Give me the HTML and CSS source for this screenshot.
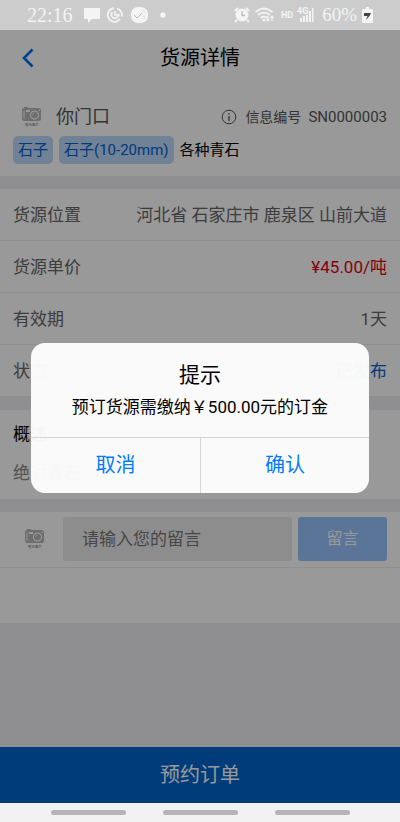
FILE: index.html
```html
<!DOCTYPE html>
<html lang="zh-CN">
<head>
<meta charset="utf-8">
<meta name="viewport" content="width=device-width, initial-scale=1">
<title>货源详情</title>
<link rel="stylesheet" href="styles.css">
</head>
<body>
<header class="status">
  <span class="time">22:16</span>
  <svg class="notices" width="84" height="18" viewBox="0 0 84 18" fill="#f4f4f4" aria-hidden="true">
    <path d="M1 2h14q1 0 1 1v9q0 1-1 1H8l-4 4v-4H1q-1 0-1-1V3q0-1 1-1z"/>
    <g fill="none" stroke="#f4f4f4" stroke-width="1.700">
      <path d="M30 2.200A6.800 6.800 0 1 0 36 13M33 2.500A6.800 6.800 0 0 1 37.800 10.500"/>
      <path d="M28.500 6A3.600 3.600 0 1 0 34.500 7.500M31 5v4h3"/>
    </g>
    <rect x="47" y="1" width="17" height="16" rx="7"/>
    <path d="M50 9l3 3 5-5" fill="none" stroke="#bbb"/>
    <path d="M60 4v3M60 10v4" stroke="#ccc" stroke-dasharray="1 1"/>
    <circle cx="79" cy="9" r="2.700"/>
  </svg>
  <span class="spacer"></span>
  <svg width="82" height="18" viewBox="0 0 82 18" fill="#f4f4f4" aria-hidden="true">
    <path d="M1 5l3-3M15 5l-3-3M3 14l-2 2M13 14l2 2" stroke="#f4f4f4" stroke-width="2"/>
    <circle cx="8" cy="9" r="6.500"/>
    <path d="M8 5v4.500h3" fill="none" stroke="#bbb" stroke-width="1.300"/>
    <g fill="none" stroke="#f4f4f4" stroke-width="1.700">
      <path d="M21.500 6q8.500-7 17 0M24 9q6-5 12 0M26.500 12q3.500-3 7 0"/>
      <path d="M34 10v5m-1.500-2l1.500 2 1.500-2M38 15v-5m-1.500 2l1.500-2 1.500 2" stroke-width="1.200"/>
    </g>
    <circle cx="30" cy="14" r="1.500"/>
    <text x="47" y="12" class="net">HD</text>
    <text x="63" y="8" class="net">4G</text>
    <path d="M66 12h2v4h-2zM69 10h2v6h-2zM72 9h2v7h-2zM75 5h2v11h-2zM78 2h1.500v14h-1.500z"/>
  </svg>
  <span class="percent">60%</span>
  <svg width="11" height="16" viewBox="0 0 11 16" aria-hidden="true">
    <path fill="#f4f4f4" d="M4 0h3v2h3q1 0 1 1v12q0 1-1 1H1q-1 0-1-1V3q0-1 1-1h3z"/>
    <path fill="#444" d="M2 6h7l-1.500 3L4 13l1.500-4H2z"/>
  </svg>
</header>

<div class="app">
  <nav class="bar">
    <button class="back" aria-label="返回"><svg width="12" height="20" viewBox="0 0 12 20"><path d="M10.500 1.500L2 10l8.500 8.500" fill="none" stroke="#0070f0" stroke-width="2.600"/></svg></button>
    <h1>货源详情</h1>
  </nav>

  <main>
    <section class="summary">
      <div class="owner">
        <svg class="camera" viewBox="0 0 20 22">
          <path fill="#b8b8b8" fill-rule="evenodd" d="M2 2V1h4v1h10.500q2.500 0 2.500 2v9q0 2-2 2H2q-2 0-2-2V4q0-2 2-2zM1.500 5v8h1V4.500zM4 4v2h4V4zM12.500 4.500a4.500 4.500 0 1 0 .01 0zM12.500 5.500a3.500 3.500 0 1 1-.01 0zM16.500 4v1h1.500V4z"/>
          <path fill="none" stroke="#fff" stroke-width=".7" d="M10.500 9a2.300 2.300 0 0 1 2-2"/>
          <text x="10" y="20" text-anchor="middle" font-size="3.500" fill="#777">暂无图片</text>
        </svg>
        <span class="name">你门口</span>
        <svg width="16" height="16" viewBox="0 0 16 16" aria-hidden="true"><circle cx="8" cy="8" r="6.800" fill="none" stroke="#555"/><path d="M8 7v5M8 4v1.500" stroke="#555" stroke-width="1.300"/></svg>
        <span class="serial"><span>信息编号</span><span class="number">SN0000003</span></span>
      </div>
      <div class="tags">
        <span class="tag">石子</span>
        <span class="tag">石子(10-20mm)</span>
        <span>各种青石</span>
      </div>
    </section>

    <dl class="details">
      <div><dt>货源位置</dt><dd>河北省 石家庄市 鹿泉区 山前大道</dd></div>
      <div><dt>货源单价</dt><dd class="price">¥45.00/吨</dd></div>
      <div><dt>有效期</dt><dd>1天</dd></div>
      <div><dt>状态</dt><dd class="state">已发布</dd></div>
    </dl>

    <section class="about">
      <h2>概述</h2>
      <p>绝对青石</p>
    </section>

    <section class="comments">
      <form class="comment">
        <svg class="camera" viewBox="0 0 20 22">
          <path fill="#b8b8b8" fill-rule="evenodd" d="M2 2V1h4v1h10.500q2.500 0 2.500 2v9q0 2-2 2H2q-2 0-2-2V4q0-2 2-2zM1.500 5v8h1V4.500zM4 4v2h4V4zM12.500 4.500a4.500 4.500 0 1 0 .01 0zM12.500 5.500a3.500 3.500 0 1 1-.01 0zM16.500 4v1h1.500V4z"/>
          <path fill="none" stroke="#fff" stroke-width=".7" d="M10.500 9a2.300 2.300 0 0 1 2-2"/>
          <text x="10" y="20" text-anchor="middle" font-size="3.500" fill="#777">暂无图片</text>
        </svg>
        <input type="text" placeholder="请输入您的留言" aria-label="留言内容">
        <button type="button">留言</button>
      </form>
    </section>
  </main>

  <button class="order">预约订单</button>

  <div class="mask">
    <div class="dialog" role="dialog" aria-modal="true" aria-labelledby="dialog-title">
      <div class="message">
        <h2 id="dialog-title">提示</h2>
        <p>预订货源需缴纳￥500.00元的订金</p>
      </div>
      <div class="actions">
        <button>取消</button>
        <button>确认</button>
      </div>
    </div>
  </div>
</div>

<footer class="gestures"><i></i><i></i><i></i></footer>
</body>
</html>
```
FILE: styles.css
```css
* { box-sizing: border-box; }
body, h1, h2, p, dl, dd { margin: 0; }
body {
  min-height: 100vh;
  display: flex;
  flex-direction: column;
  font: 17px/24px Roboto, "Noto Sans CJK SC", sans-serif;
  color: #000;
  background: #f2f2f2;
}
h1, h2 { font-weight: 400; }
button, input { font: inherit; border: 0; padding: 0; }

.status {
  height: 30px;
  display: flex;
  align-items: center;
  padding: 0 27px;
  background: #ccc;
  color: #f4f4f4;
  font-family: "Liberation Serif", serif;
}
.time { font-size: 20px; }
.notices { margin-left: 11px; }
.spacer { flex: 1; }
.net { font: bold 9px Roboto, sans-serif; }
.net + .net { text-anchor: start; }
.percent { font-size: 19px; margin: 0 5px 0 6px; }

.app {
  flex: 1;
  display: flex;
  flex-direction: column;
  position: relative;
  background: #efeff4;
}
.bar {
  height: 55px;
  display: grid;
  grid-template-columns: 48px 1fr 48px;
  align-items: center;
  background: #fff;
}
.back { background: none; height: 54px; display: grid; place-items: center; padding-left: 8px; }
.bar h1 { font-size: 20px; text-align: center; }

main { flex: 1; display: flex; flex-direction: column; gap: 13px; }
.summary { background: #fff; padding: 18px 13px 12px; }
.owner { display: flex; align-items: center; height: 28px; color: #555; }
.camera { width: 20px; height: 22px; margin: 0 14px 0 9px; flex: none; }
.name { font-size: 18px; flex: 1; }
.serial { display: flex; gap: 7px; margin-left: 8px; font-size: 14px; }
.number { font-size: 15px; }
.tags { display: flex; align-items: center; gap: 6px; margin-top: 5px; font-size: 15px; }
.tag {
  padding: 2px 5px;
  border-radius: 5px;
  background: #bdd7fa;
  color: #0062cc;
}

.details { background: #fff; color: #666; }
.details div {
  display: flex;
  justify-content: space-between;
  align-items: center;
  height: 52px;
  padding: 0 13px;
  border-bottom: 1px solid #eee;
}
.details .price { color: #e00010; }
.details .state { color: #0062cc; }

.about { background: #fff; padding: 12px 13px; height: 89px; }
.about h2 { font-size: 17px; }
.about p { margin-top: 15px; color: #888; }

.comments { background: #fff; height: 111px; }
.comment {
  display: flex;
  align-items: center;
  padding: 5px 13px 6px;
  border-bottom: 1px solid #eee;
}
.comment .camera { margin: 0 18px 0 12px; }
.comment input {
  flex: 1;
  min-width: 0;
  height: 44px;
  padding: 0 19px;
  border-radius: 3px;
  background: #ececec;
}
.comment input::placeholder { color: #777; opacity: 1; }
.comment button {
  width: 89px;
  height: 44px;
  margin-left: 6px;
  border-radius: 3px;
  background: #98c3ff;
  color: #fff;
  font-size: 16px;
}
.order { height: 56px; background: #0064cc; color: #fff; font-size: 20px; }

.mask {
  position: absolute;
  inset: 0;
  display: grid;
  place-items: center;
  padding: 2px 31px 0;
  background: rgba(0, 0, 0, .4);
}
.dialog {
  width: 100%;
  max-width: 420px;
  border-radius: 14px;
  overflow: hidden;
  background: rgba(253, 253, 253, .97);
  text-align: center;
}
.message { padding: 20px 12px 17px; }
.message h2 { font-size: 21px; margin-bottom: 8px; }
.message p { line-height: 25px; }
.actions { display: grid; grid-template-columns: 1fr 1fr; border-top: 1px solid #d5d5d8; }
.actions button { height: 55px; background: none; color: #007aff; font-size: 20px; }
.actions button + button { border-left: 1px solid #d5d5d8; }

.gestures {
  height: 19px;
  display: flex;
  justify-content: center;
  align-items: center;
  gap: 37px;
}
.gestures i { width: 75px; height: 5px; border-radius: 3px; background: #b5b5b5; }
```
